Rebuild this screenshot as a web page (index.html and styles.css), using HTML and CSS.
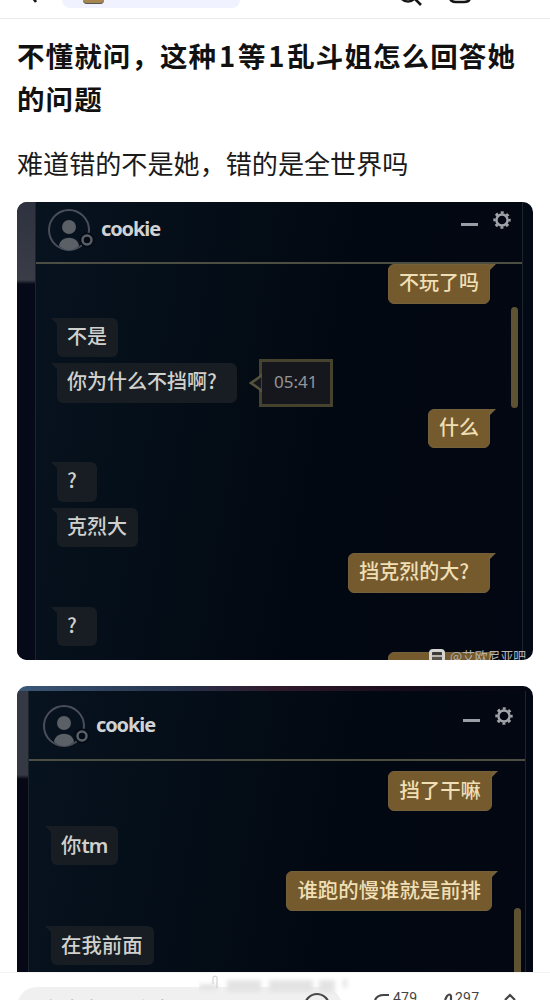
FILE: index.html
```html
<!DOCTYPE html>
<html lang="zh-CN">
  <head>
    <meta charset="UTF-8" />
    <meta name="viewport" content="width=device-width, initial-scale=1.0" />
    <title>帖子</title>
    <link rel="stylesheet" href="styles.css">
  </head>
  <body>
    <svg class="defs" width="0" height="0">
      <symbol id="avatar" viewBox="0 0 50 46">
        <circle cx="21" cy="21" r="20" fill="none" stroke="#4a4e5a" stroke-width="2" />
        <circle cx="21" cy="18" r="7" fill="#5b5f66" />
        <path d="M11 37c1-11 19-11 20 0q-10 8-20 0z" fill="#5b5f66" />
        <circle cx="39" cy="31" r="7.500" fill="#040b16" />
        <circle cx="39" cy="31" r="4.500" fill="none" stroke="#5b5f66" stroke-width="2.500" />
      </symbol>
      <symbol id="gear" viewBox="0 0 20 20">
        <circle cx="10" cy="10" r="5.600" fill="none" stroke="#a0a4a8" stroke-width="2.500" />
        <circle cx="10" cy="10" r="7.500" fill="none" stroke="#a0a4a8" stroke-width="2.400" stroke-dasharray="3 2.890" stroke-dashoffset="1.500" />
      </symbol>
    </svg>
    <main class="page">
      <header class="nav">
        <svg class="nav__back" width="12" height="6" viewBox="0 0 12 6"><path d="M1-6L7 2" /></svg>
        <div class="nav__pill"><span class="nav__avatar"></span></div>
        <svg class="nav__icons" width="90" height="8" viewBox="0 0 90 8">
          <circle cx="15" cy="-7" r="8.500" />
          <path d="M21-2l7 7M57-6v3q0 5 6 5h8q6 0 6-5v-3" />
        </svg>
      </header>
      <article class="post">
        <h1 class="post__title">不懂就问，这种<span class="num">1</span>等<span class="num">1</span>乱斗姐怎么回答她的问题</h1>
        <p class="post__text">难道错的不是她，错的是全世界吗</p>

        <section class="chat">
          <div class="chat__strip"></div>
          <div class="chat__window">
            <div class="chat__head">
              <svg class="chat__avatar" width="50" height="46"><use href="#avatar" /></svg>
              <span class="chat__name">cookie</span>
              <i class="chat__min"></i>
              <svg class="chat__gear" width="20" height="20"><use href="#gear" /></svg>
            </div>
            <div class="chat__list">
              <div class="msg msg--me">不玩了吗</div>
              <div class="msg gap-l">不是</div>
              <div class="row gap-s">
                <div class="msg msg--ask">你为什么不挡啊?</div>
                <div class="tip">
                  <svg class="tip__arrow" width="13" height="20" viewBox="0 0 13 20"><path d="M12 1v2L2 10l10 7v2" /></svg>
                  05:41
                </div>
              </div>
              <div class="msg msg--me gap-s">什么</div>
              <div class="msg msg--ask gap-l">?</div>
              <div class="msg gap-s">克烈大</div>
              <div class="msg msg--me msg--ask gap-s">挡克烈的大?</div>
              <div class="msg msg--ask gap-l">?</div>
              <div class="msg msg--me msg--empty gap-s"></div>
            </div>
            <i class="chat__scroll"></i>
          </div>
          <div class="chat__mark"><span class="chat__logo"></span>@艾欧尼亚吧</div>
        </section>

        <section class="chat chat--second">
          <div class="chat__strip"></div>
          <div class="chat__window">
            <div class="chat__head">
              <svg class="chat__avatar" width="50" height="46"><use href="#avatar" /></svg>
              <span class="chat__name">cookie</span>
              <i class="chat__min"></i>
              <svg class="chat__gear" width="20" height="20"><use href="#gear" /></svg>
            </div>
            <div class="chat__list">
              <div class="msg msg--me">挡了干嘛</div>
              <div class="msg gap-l">你<span class="latin">tm</span></div>
              <div class="msg msg--me gap-s">谁跑的慢谁就是前排</div>
              <div class="msg gap-l">在我前面</div>
            </div>
            <i class="chat__scroll"></i>
          </div>
        </section>
      </article>
      <footer class="bar">
        <div class="bar__input">欢迎参与讨论</div>
        <svg class="bar__icons" width="250" height="16" viewBox="0 0 250 16">
          <circle cx="17" cy="22" r="12" />
          <path d="M75 16q2-5 9-5h5M145 16l2-4q3-3 4 0v4M205 16l5-5 5 5" />
        </svg>
        <span class="bar__num bar__num--a">479</span>
        <span class="bar__num bar__num--b">297</span>
        <svg class="bar__ghost" width="152" height="20" viewBox="0 0 152 20">
          <path class="ghost__fill" d="M0 9h18v6H0zM28 5h34v12H28zM70 5h44v12H70zM120 5h16v12h-16zM144 4h4v9h-4z" />
          <path class="ghost__line" d="M14 9V2q2-2 4 0v11" />
        </svg>
      </footer>
    </main>
  </body>
</html>
```
FILE: styles.css
```css
* {
  box-sizing: border-box;
}
body {
  margin: 0;
  background: #fff;
  font-family: "Noto Sans CJK SC", sans-serif;
}
.defs {
  position: absolute;
}
.page {
  height: 1000px;
  overflow: hidden;
  display: flex;
  flex-direction: column;
}
.nav {
  flex: 0 0 19px;
  display: flex;
  align-items: flex-start;
  border-bottom: 1px solid #ebebeb;
}
.nav svg {
  fill: none;
  stroke: #151515;
  stroke-width: 2.6;
}
.nav__back {
  margin-left: 29px;
}
.nav__pill {
  margin-left: 21px;
  width: 178px;
  height: 8px;
  padding-left: 21px;
  border-radius: 0 0 20px 20px;
  background: #f0f2ff;
}
.nav__avatar {
  display: block;
  width: 21px;
  height: 4px;
  border-radius: 0 0 8px 8px;
  background: #a7864f;
  border-bottom: 1px solid #555;
}
.nav__icons {
  margin-left: 153px;
}
.post {
  flex: 1 1 0;
  min-height: 0;
  overflow: hidden;
  padding: 15px 17px 0;
}
.post__title {
  margin: 0;
  font-size: 27.5px;
  line-height: 43px;
  font-weight: 700;
  letter-spacing: 1.1px;
  color: #111;
}
.num {
  padding: 0 1.7px;
}
.post__text {
  margin: 22px 0 18px;
  font-size: 26.1px;
  line-height: 42px;
  font-weight: 400;
  color: #1a1a1a;
}
.chat {
  position: relative;
  width: 516px;
  height: 458px;
  display: flex;
  overflow: hidden;
  border-radius: 10px;
  background: #030a15;
}
.chat__strip {
  flex: 0 0 18px;
  background: linear-gradient(#2e323e, #3a3d48 78px, #060917 82px);
}
.chat__window {
  position: relative;
  flex: 0 0 488px;
  border: solid #1c242c;
  border-width: 0 1px;
  background: linear-gradient(100deg, #07131f, #020811 60%, #030713);
}
.chat__head {
  height: 62px;
  display: flex;
  align-items: flex-start;
  padding: 7px 10px 0 12px;
  border-bottom: 2px solid #4c4d43;
}
.chat__name {
  margin: 6px auto 0 3px;
  font: 700 20px/28px "Noto Sans", sans-serif;
  letter-spacing: -1.1px;
  color: #d0d2d3;
}
.chat__min {
  width: 17px;
  height: 3px;
  margin: 14px 14px 0 0;
  background: #9a9fa5;
}
.chat__gear {
  margin-top: 1px;
}
.chat__list {
  padding: 0 32px 0 21px;
  display: flex;
  flex-direction: column;
  align-items: flex-start;
}
.msg {
  position: relative;
  height: 39.5px;
  padding: 0 11px 0 10px;
  border-radius: 0 6px 6px 6px;
  background: #171d22;
  color: #d0d0cd;
  font-size: 20px;
  line-height: 36px;
  font-weight: 500;
  white-space: nowrap;
}
.msg::before {
  content: "";
  position: absolute;
  top: 0;
  left: -6px;
  border: 0 solid transparent;
  border-bottom-width: 6px;
  border-right: 6px solid #171d22;
}
.msg--me {
  align-self: flex-end;
  border-radius: 6px 0 6px 6px;
  background: #745a2d;
  border: 1px solid #74613c;
  padding: 0 10px;
  line-height: 34px;
  color: #f0dfb4;
}
.msg--me::before {
  left: auto;
  right: -7px;
  top: -1px;
  border-right: 0;
  border-left: 6px solid #74613c;
}
.msg--ask {
  padding-right: 20px;
}
.msg--empty {
  width: 102px;
}
.latin {
  font-family: "Noto Sans", sans-serif;
  font-weight: 600;
  letter-spacing: -1px;
}
.gap-s {
  margin-top: 6px;
}
.gap-l {
  margin-top: 14px;
}
.row {
  display: flex;
  align-items: center;
  height: 39.5px;
}
.tip {
  position: relative;
  width: 74px;
  height: 48px;
  margin-left: 22px;
  border: 3px solid #45432e;
  background: #16171c;
  color: #93959a;
  font: 17px/40px "Noto Sans", sans-serif;
  text-align: center;
}
.tip__arrow {
  position: absolute;
  left: -13px;
  top: 11px;
  fill: #16171c;
  stroke: #55533c;
  stroke-width: 2.5;
}
.chat__scroll {
  position: absolute;
  right: 4px;
  top: 105px;
  width: 7px;
  height: 101px;
  border-radius: 4px;
  background: #5d5333;
}
.chat__mark {
  position: absolute;
  right: 7px;
  top: 445px;
  display: flex;
  gap: 5px;
  font-size: 12.8px;
  line-height: 18px;
  color: #b4b4b2;
  white-space: nowrap;
}
.chat__logo {
  width: 16px;
  height: 18px;
  margin-top: 2px;
  border: 3px solid #d5d5d2;
  border-radius: 4px;
  background: linear-gradient(#3c3a36 3px, #b8b6ae 3px 5px, #57544d 5px);
}
.chat--second {
  margin-top: 26px;
  padding-top: 5px;
  background: linear-gradient(90deg, #3c5878, #26344e 30%, #301a2c 50%, #180c1b 75%, #030713) top / 100% 5px no-repeat, #030713;
}
.chat--second .chat__strip {
  flex-basis: 11px;
  background: linear-gradient(#343945, #363944 84px, #060815 88px);
}
.chat--second .chat__window {
  flex-basis: 498px;
}
.chat--second .chat__head {
  height: 70px;
  padding: 14px 11px 0 14px;
}
.chat--second .chat__list {
  padding: 10px 33px 0 22px;
}
.chat--second .msg {
  font-size: 20.4px;
}
.chat--second .gap-l {
  margin-top: 15px;
}
.chat--second .chat__scroll {
  top: 217px;
}
.bar {
  position: relative;
  flex: 0 0 28px;
  border-top: 1px solid #f3f3f3;
  padding: 14px 0 0 17px;
  overflow: hidden;
  background: #fff;
}
.bar__input {
  width: 325px;
  height: 40px;
  padding: 7px 21px;
  border-radius: 20px;
  background: #f0f0f0;
  color: #999;
  font-size: 22px;
  line-height: 28px;
}
.bar__icons {
  position: absolute;
  left: 300px;
  bottom: 0;
  fill: none;
  stroke: #444;
  stroke-width: 2.2;
}
.bar__num {
  position: absolute;
  top: 17px;
  font: 400 14px/16px Roboto, sans-serif;
  letter-spacing: 0.2px;
  color: #444;
}
.bar__num--a {
  left: 393px;
}
.bar__num--b {
  left: 455px;
}
.bar__ghost {
  position: absolute;
  left: 199px;
  top: 2px;
}
.ghost__fill {
  fill: #e3e3e3;
  filter: blur(2px);
}
.ghost__line {
  fill: none;
  stroke: #c9c9c9;
}
```
